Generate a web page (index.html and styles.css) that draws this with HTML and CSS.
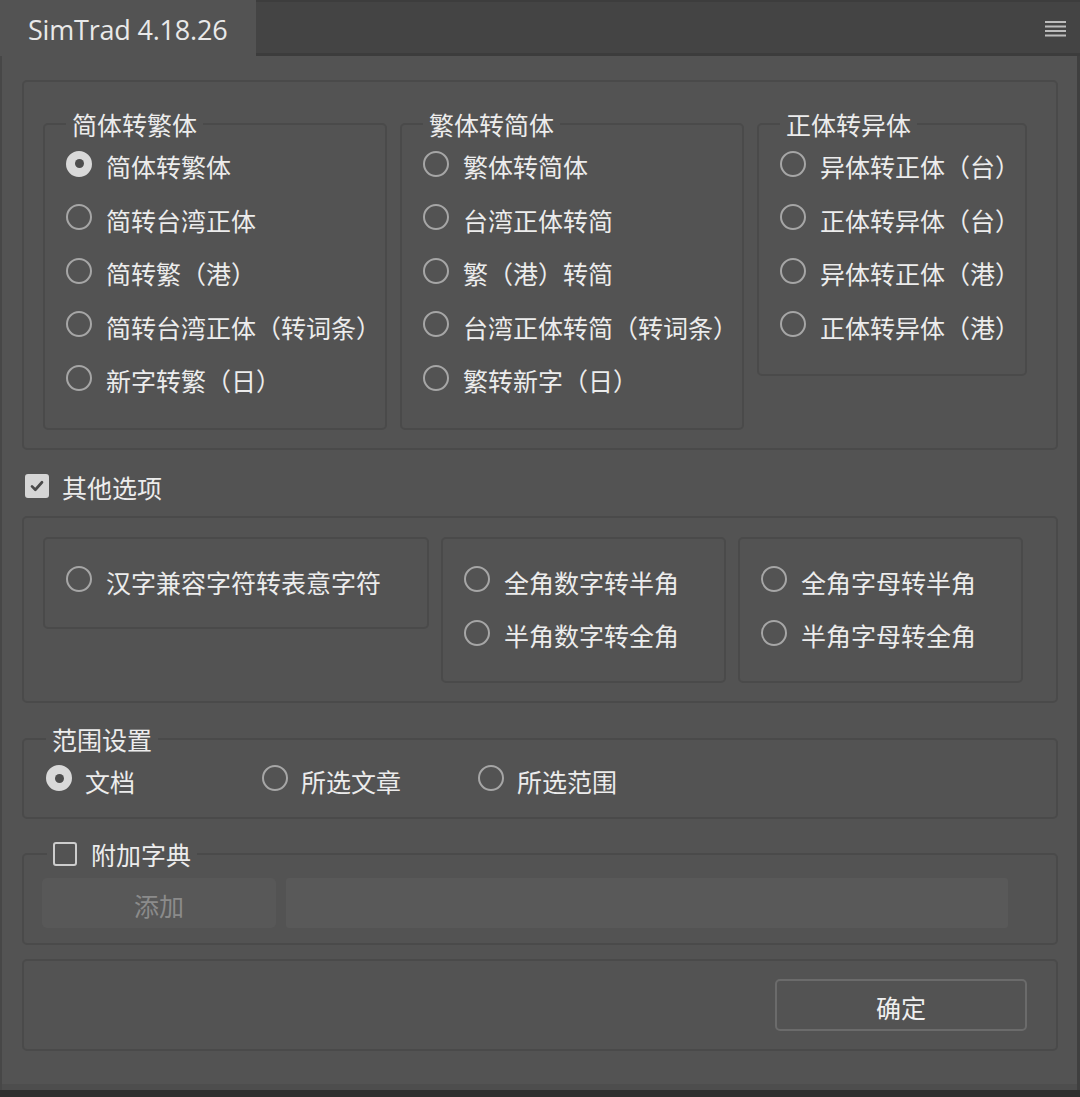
FILE: index.html
```html
<!DOCTYPE html>
<html lang="zh-CN">
<head>
<meta charset="utf-8">
<title>SimTrad 4.18.26</title>
<link rel="stylesheet" href="styles.css">
</head>
<body>
<div class="panel">
  <header class="tabs">
    <div class="tab">SimTrad 4.18.26</div>
    <div class="tab-fill"></div>
    <svg class="menu" width="22" height="16" viewBox="0 0 22 16" aria-hidden="true">
      <rect x="0" y="0" width="21" height="2" fill="#bcbcbc"/>
      <rect x="0" y="4.5" width="21" height="2" fill="#bcbcbc"/>
      <rect x="0" y="9" width="21" height="2" fill="#bcbcbc"/>
      <rect x="0" y="13.5" width="21" height="2" fill="#bcbcbc"/>
    </svg>
  </header>

  <main class="content">
    <div class="group conv">
      <fieldset class="box">
        <legend>简体转繁体</legend>
        <label class="opt"><span class="radio on"></span><span class="txt">简体转繁体</span></label>
        <label class="opt"><span class="radio"></span><span class="txt">简转台湾正体</span></label>
        <label class="opt"><span class="radio"></span><span class="txt">简转繁（港）</span></label>
        <label class="opt"><span class="radio"></span><span class="txt">简转台湾正体（转词条）</span></label>
        <label class="opt"><span class="radio"></span><span class="txt">新字转繁（日）</span></label>
      </fieldset>
      <fieldset class="box">
        <legend>繁体转简体</legend>
        <label class="opt"><span class="radio"></span><span class="txt">繁体转简体</span></label>
        <label class="opt"><span class="radio"></span><span class="txt">台湾正体转简</span></label>
        <label class="opt"><span class="radio"></span><span class="txt">繁（港）转简</span></label>
        <label class="opt"><span class="radio"></span><span class="txt">台湾正体转简（转词条）</span></label>
        <label class="opt"><span class="radio"></span><span class="txt">繁转新字（日）</span></label>
      </fieldset>
      <fieldset class="box">
        <legend>正体转异体</legend>
        <label class="opt"><span class="radio"></span><span class="txt">异体转正体（台）</span></label>
        <label class="opt"><span class="radio"></span><span class="txt">正体转异体（台）</span></label>
        <label class="opt"><span class="radio"></span><span class="txt">异体转正体（港）</span></label>
        <label class="opt"><span class="radio"></span><span class="txt">正体转异体（港）</span></label>
      </fieldset>
    </div>

    <label class="check-row">
      <span class="check on">
        <svg width="24" height="24" viewBox="0 0 24 24" aria-hidden="true"><path d="M6 12.5 L10 16.5 L18 7.5" fill="none" stroke="#4a4a4a" stroke-width="3.2" stroke-linecap="round" stroke-linejoin="round"/></svg>
      </span>
      <span class="txt">其他选项</span>
    </label>

    <div class="group other">
      <div class="box wide">
        <label class="opt"><span class="radio"></span><span class="txt">汉字兼容字符转表意字符</span></label>
      </div>
      <div class="box half">
        <label class="opt"><span class="radio"></span><span class="txt">全角数字转半角</span></label>
        <label class="opt"><span class="radio"></span><span class="txt">半角数字转全角</span></label>
      </div>
      <div class="box half">
        <label class="opt"><span class="radio"></span><span class="txt">全角字母转半角</span></label>
        <label class="opt"><span class="radio"></span><span class="txt">半角字母转全角</span></label>
      </div>
    </div>

    <fieldset class="group range">
      <legend>范围设置</legend>
      <div class="range-row">
        <label class="opt scope"><span class="radio on"></span><span class="txt">文档</span></label>
        <label class="opt scope"><span class="radio"></span><span class="txt">所选文章</span></label>
        <label class="opt scope"><span class="radio"></span><span class="txt">所选范围</span></label>
      </div>
    </fieldset>

    <fieldset class="group dict">
      <legend><span class="check"></span><span class="txt">附加字典</span></legend>
      <div class="dict-row">
        <button class="btn-add" type="button" disabled>添加</button>
        <div class="dict-path"></div>
      </div>
    </fieldset>

    <div class="group actions">
      <button class="btn-ok" type="button">确定</button>
    </div>
  </main>
</div>
</body>
</html>
```

FILE: styles.css
```css
* {
  box-sizing: border-box;
}

body {
  margin: 0;
  background: #2f2f2f;
  font-family: "Noto Sans CJK SC", "Noto Sans", sans-serif;
  color: #ececec;
}

.panel {
  width: 1080px;
  height: 1090px;
  background: #535353;
  box-shadow: inset 2px 0 0 #474747, inset -3px 0 0 #3f3f3f, inset 0 -6px 0 #4d4d4d;
}

/* tab strip */
.tabs {
  display: flex;
  align-items: center;
  height: 56px;
  background: #444444;
  box-shadow: inset 0 -3px 0 #3c3c3c, inset 0 2px 0 #3d3d3d;
}

.tab {
  width: 256px;
  height: 56px;
  background: #535353;
  padding-left: 28px;
  font-family: "Open Sans", "Noto Sans", sans-serif;
  font-size: 27px;
  line-height: 60px;
  color: #e9e9e9;
  letter-spacing: -0.2px;
  white-space: nowrap;
}

.tab-fill {
  flex: 1;
}

.menu {
  margin-right: 13px;
  margin-top: 1px;
}

/* body */
.content {
  display: flex;
  flex-direction: column;
  align-items: flex-start;
  padding: 24px 22px 0;
}

.group {
  width: 1036px;
  margin: 0;
  border: 2px solid #4a4a4a;
  border-radius: 5px;
  min-width: 0;
}

.box {
  margin: 0;
  min-width: 0;
  border: 2px solid #4a4a4a;
  border-radius: 5px;
}

legend {
  padding: 0 6px;
  font-size: 25px;
  line-height: 26px;
  color: #ececec;
}

.opt {
  display: flex;
  align-items: center;
  gap: 14px;
  height: 53.5px;
  font-size: 25px;
  line-height: 26px;
  color: #ececec;
  white-space: nowrap;
}

/* label text sits a touch below the indicator's centre */
.txt {
  padding-top: 5px;
}

legend .txt {
  padding-top: 0;
}

.radio {
  flex: none;
  width: 26px;
  height: 26px;
  border: 2px solid #a6a6a6;
  border-radius: 50%;
  display: flex;
  align-items: center;
  justify-content: center;
}

.radio.on {
  background: #d9d9d9;
  border-color: #d9d9d9;
}

.radio.on::after {
  content: "";
  width: 9px;
  height: 9px;
  border-radius: 50%;
  background: #4d4d4d;
}

.check {
  flex: none;
  width: 24px;
  height: 24px;
  border: 2px solid #cdcdcd;
  border-radius: 3px;
  display: inline-flex;
  align-items: center;
  justify-content: center;
}

.check.on {
  background: #d6d6d6;
  border-color: #d6d6d6;
}

/* conversion direction */
.conv {
  display: grid;
  grid-template-columns: 344px 344px 270px;
  column-gap: 13px;
  align-items: start;
  padding: 29px 0 18px 19px;
}

.conv .box {
  padding: 0 21px 23px;
}

/* other options */
.check-row {
  display: flex;
  align-items: center;
  gap: 13px;
  height: 26px;
  margin: 23px 0 17px 3px;
  font-size: 25px;
  line-height: 26px;
}

.check-row .txt {
  padding-top: 2px;
}

.other {
  display: flex;
  align-items: flex-start;
  gap: 12px;
  padding: 19px 0 18px 19px;
}

.other .box {
  padding: 14px 21px 21px;
}

.other .wide {
  width: 386px;
}

.other .half {
  width: 285px;
}

/* range */
.range {
  margin-top: 23px;
  padding: 0 22px 12px;
}

.range-row {
  display: flex;
}

.range .scope {
  width: 216px;
  gap: 13px;
}

/* dictionary */
.dict {
  margin-top: 22px;
  padding: 0 18px 15px;
}

.dict legend {
  display: flex;
  align-items: center;
  gap: 14px;
  margin-left: 5px;
}

.dict-row {
  display: flex;
  gap: 10px;
  margin-top: 11px;
}

.btn-add {
  width: 234px;
  height: 50px;
  border: none;
  border-radius: 5px;
  background: #585858;
  color: #8b8b8b;
  font-family: inherit;
  font-size: 25px;
  padding-top: 4px;
}

.dict-path {
  width: 722px;
  height: 50px;
  border-radius: 3px;
  background: #595959;
}

/* footer */
.actions {
  margin-top: 14px;
  display: flex;
  justify-content: flex-end;
  padding: 18px 29px 18px 0;
}

.btn-ok {
  width: 252px;
  height: 52px;
  border: 2px solid #6b6b6b;
  border-radius: 5px;
  background: transparent;
  color: #efefef;
  font-family: inherit;
  font-size: 25px;
  padding-top: 4px;
}
```
